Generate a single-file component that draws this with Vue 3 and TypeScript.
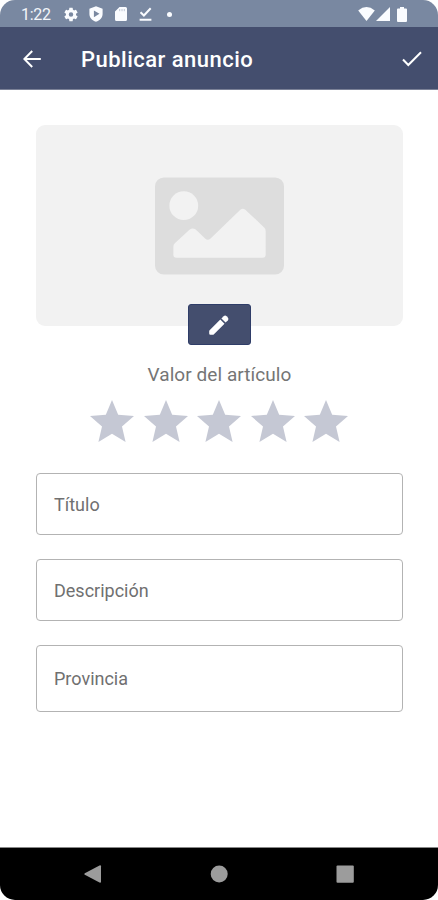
<script setup lang="ts">
import { ref } from 'vue'

interface Field {
  id: string
  label: string
  tall?: boolean
}

const fields: Field[] = [
  { id: 'title', label: 'Título' },
  { id: 'description', label: 'Descripción' },
  { id: 'province', label: 'Provincia', tall: true },
]
const rating = ref(0)
</script>

<template>
  <div class="screen">
    <div class="status">
      <span class="time">1:22</span>
      <svg class="gear" viewBox="2 2 20 20"><path fill-rule="evenodd" d="M19.14 12.94c.04-.3.06-.61.06-.94s-.02-.64-.07-.94l2.03-1.58a.49.49 0 0 0 .12-.61l-1.92-3.32a.49.49 0 0 0-.59-.22l-2.39.96c-.5-.38-1.03-.7-1.62-.94l-.36-2.54a.48.48 0 0 0-.48-.41h-3.84c-.24 0-.43.17-.47.41l-.36 2.54c-.59.24-1.13.57-1.62.94l-2.39-.96a.48.48 0 0 0-.59.22L2.74 8.87c-.12.21-.08.47.12.61l2.03 1.58c-.05.3-.09.63-.09.94s.02.64.07.94l-2.03 1.58a.49.49 0 0 0-.12.61l1.92 3.32c.12.22.37.29.59.22l2.39-.96c.5.38 1.03.7 1.62.94l.36 2.54c.05.24.24.41.48.41h3.84c.24 0 .44-.17.47-.41l.36-2.54c.59-.24 1.13-.56 1.62-.94l2.39.96c.22.08.47 0 .59-.22l1.92-3.32a.48.48 0 0 0-.12-.61zM12 15.200a3.200 3.200 0 1 1 0-6.400 3.200 3.200 0 0 1 0 6.400z" /></svg>
      <svg class="shield" viewBox="0 0 14 16"><path fill-rule="evenodd" d="M7 .3 13.6 2.8V8c0 3.700-2.700 6.500-6.600 7.800C3.100 14.500.4 11.700.4 8V2.800zM4.900 4.400v6.800L10.500 7.800z" /></svg>
      <svg class="card" viewBox="0 0 12 14"><path d="M4.500 0H10.500A1.500 1.500 0 0 1 12 1.500v11A1.500 1.500 0 0 1 10.500 14h-9A1.500 1.500 0 0 1 0 12.500V4.500z" /><path class="slots" d="M4.700 2v2.200M7 2v2.200M9.300 2v2.200" /></svg>
      <svg class="done" viewBox="0 0 13 14"><path d="M1.500 5.200 4.900 8.500 11.700 1.200M.6 12.700h11.800" /></svg>
      <i class="dot"></i>
      <svg class="wifi" viewBox="0 0 17 14"><path d="M8.500 14 .2 3.500Q8.500-3.300 16.800 3.500z" /></svg>
      <svg class="signal" viewBox="0 0 14 14"><path d="M14 0v14H0z" /></svg>
      <svg class="battery" viewBox="0 0 10 15"><path d="M3 0h4v1.500h2a1 1 0 0 1 1 1V14a1 1 0 0 1-1 1H1a1 1 0 0 1-1-1V2.500a1 1 0 0 1 1-1h2z" /></svg>
    </div>

    <header class="bar">
      <button class="icon-button" aria-label="Volver">
        <svg class="back" viewBox="0 0 18 18"><path d="M17.800 9H1.600M9.200 1 1.300 9l7.900 8" /></svg>
      </button>
      <h1>Publicar anuncio</h1>
      <button class="icon-button" aria-label="Guardar">
        <svg class="check" viewBox="0 0 20 16"><path d="M1 8.500 6.300 14 19 1.200" /></svg>
      </button>
    </header>

    <main>
      <div class="photo">
        <svg class="picture" viewBox="0 0 130 98">
          <rect width="130" height="98" rx="9" class="frame" />
          <circle cx="29" cy="28.500" r="14.500" class="cut" />
          <path class="cut" d="M18.500 70Q18.500 68 20 66.500L35 52.500Q38 50.500 41 52.500L50.500 61.500Q53 64 56 61.500L86 32.500Q88.500 30.500 91 32.500L110 50.500Q111.500 52 111.500 54V78Q111.500 81 108.500 81H21.500Q18.500 81 18.500 78z" />
        </svg>
        <button class="edit" aria-label="Editar imagen">
          <svg viewBox="0 0 22 22"><path d="M1.200 17.100V19.600Q1.200 20.800 2.400 20.800H4.900Q5.300 20.800 5.700 20.400L16.500 9.700 12.300 5.500 1.600 16.200Q1.200 16.600 1.200 17.100z" /><path d="m13.400 4.400 2.200-2.200q1.500-1.400 3 0l1.200 1.200q1.400 1.500 0 3l-2.200 2.200z" /></svg>
        </button>
      </div>
      <p class="caption">Valor del artículo</p>
      <div class="stars">
        <button v-for="n in 5" :key="n" :class="{ on: n <= rating }" :aria-label="`${n}`" @click="rating = n">
          <svg viewBox="2 2 20 19"><path d="M12 17.270 18.180 21l-1.640-7.030L22 9.240l-7.190-.61L12 2 9.190 8.630 2 9.240l5.460 4.730L5.820 21z" /></svg>
        </button>
      </div>
      <div class="fields">
        <div v-for="f in fields" :key="f.id" class="field" :class="{ tall: f.tall }">{{ f.label }}</div>
      </div>
    </main>

    <nav>
      <svg viewBox="0 0 18 18"><path d="M.8 8.200 15.500.4Q17 0 17 1.200V16.800Q17 18 15.500 17.600L.8 9.800Q-.2 9 .8 8.200z" /></svg>
      <svg viewBox="0 0 18 18"><circle cx="9.200" cy="9" r="8.500" /></svg>
      <svg viewBox="0 0 18 18"><rect x=".5" y=".5" width="17.300" height="17.300" rx="1" /></svg>
    </nav>
  </div>
</template>

<style>
body { margin: 0; background: #fff; }
</style>

<style scoped>
* { box-sizing: border-box; }
svg { display: block; flex: none; }
button { border: 0; padding: 0; background: none; }
.screen {
  width: 438px;
  height: 900px;
  display: flex;
  flex-direction: column;
  overflow: hidden;
  border-radius: 15px;
  background: #fff;
  font-family: Roboto, sans-serif;
}
.status {
  height: 27px;
  flex: none;
  display: flex;
  align-items: center;
  padding: 1px 31px 0 21px;
  background: #7988a1;
  color: #f3f5fa;
  fill: #fafcff;
}
.time { width: 43px; padding-top: 1px; font-size: 16px; line-height: 20px; letter-spacing: -.3px; }
.gear { width: 14px; height: 15px; margin-right: 11px; }
.shield { width: 14px; height: 16px; margin-right: 12px; }
.card { width: 12px; height: 14px; margin-right: 12px; }
.slots { stroke: #b9c2d0; stroke-width: .9; }
.done { width: 13px; height: 14px; margin-right: 15px; fill: none; stroke: #fafcff; stroke-width: 2; }
.dot { width: 5px; height: 5px; border-radius: 50%; background: #fafcff; }
.wifi { width: 17px; height: 14px; margin-left: auto; margin-right: 1px; }
.signal { width: 14px; height: 14px; margin-right: 7px; }
.battery { width: 10px; height: 15px; }
.bar {
  height: 63px;
  flex: none;
  display: flex;
  align-items: center;
  padding: 1px 16px 0 23px;
  background: #444e6e;
  border-bottom: 1px solid #7b8197;
  color: #fff;
}
h1 { flex: 1; margin: 3px 0 0 40px; font-size: 22px; line-height: 28px; font-weight: 500; letter-spacing: .48px; }
.icon-button svg { fill: none; stroke: #fff; stroke-width: 2; }
.back { width: 18px; height: 18px; }
.check { width: 20px; height: 16px; }
main { flex: 1; padding: 35px 35px 0 36px; }
.photo {
  height: 201px;
  display: flex;
  flex-direction: column;
  align-items: center;
  padding-top: 52px;
  border-radius: 9px;
  background: #f2f2f2;
}
.picture { width: 129px; height: 98px; }
.frame { fill: #ddd; }
.cut { fill: #f2f2f2; }
.edit {
  width: 63px;
  height: 41px;
  flex: none;
  margin-top: 29px;
  display: flex;
  align-items: center;
  justify-content: center;
  border: 1px solid #2f3d68;
  border-radius: 3px;
  background: #444e6e;
}
.edit svg { width: 22px; height: 22px; margin-right: 1px; fill: #fff; }
.caption {
  margin: 37px 0 0;
  text-align: center;
  font-size: 19px;
  line-height: 24px;
  letter-spacing: .06px;
  color: #757575;
}
.stars { display: flex; justify-content: center; gap: 9.500px; margin: 13px 1px 0 0; }
.stars svg { width: 44px; height: 42px; fill: #c5c8d4; }
.stars .on svg { fill: #444e6e; }
.fields { display: flex; flex-direction: column; gap: 24px; margin-top: 31px; }
.field {
  height: 62px;
  display: flex;
  align-items: center;
  padding: 1px 17px 0;
  border: 1px solid #b3b3b3;
  border-radius: 4px;
  font-size: 18px;
  line-height: 22px;
  letter-spacing: 0;
  color: #707070;
}
.field.tall { height: 67px; }
nav {
  height: 53px;
  flex: none;
  display: flex;
  justify-content: center;
  align-items: center;
  gap: 108px;
  border-top: 1px solid #888;
  background: #000;
}
nav svg { width: 18px; height: 18px; fill: #9c9c9c; }
</style>
